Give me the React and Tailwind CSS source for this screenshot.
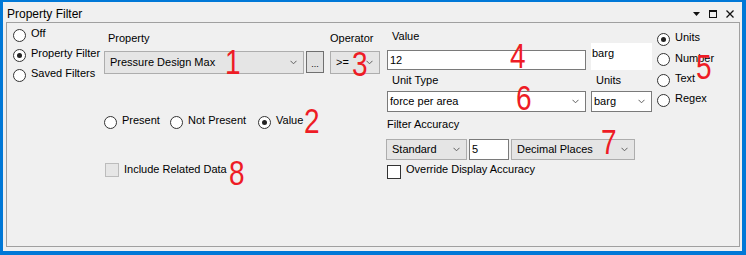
import React from "react";

const FONT = { fontFamily: '"Liberation Sans", Arial, sans-serif' };

function Radio({ checked, label, className = "" }) {
  return (
    <div className={`flex items-center h-[20px] ${className}`}>
      <span className="w-[13px] h-[13px] rounded-full border border-[#333] bg-white flex items-center justify-center shrink-0">
        {checked && <span className="w-[5px] h-[5px] rounded-full bg-[#222]" />}
      </span>
      <span className="ml-[5px] -mt-[3px] text-[11px] text-black whitespace-nowrap">{label}</span>
    </div>
  );
}

function Chevron() {
  return (
    <svg width="7" height="5" viewBox="0 0 7 5" className="shrink-0">
      <path d="M0.5 0.8 L3.5 3.8 L6.5 0.8" fill="none" stroke="#606060" strokeWidth="1" />
    </svg>
  );
}

// grey "DropDownList" style combo
function GreyCombo({ text, className = "" }) {
  return (
    <div className={`flex items-center justify-between border border-[#adadad] bg-[#e5e5e5] pl-[5px] pr-[6px] text-[11px] ${className}`}>
      <span className="whitespace-nowrap">{text}</span>
      <Chevron />
    </div>
  );
}

// white editable combo
function WhiteCombo({ text, className = "" }) {
  return (
    <div className={`flex items-center justify-between border border-[#7a7a7a] bg-white pl-[2px] pr-[6px] text-[11px] ${className}`}>
      <span className="whitespace-nowrap">{text}</span>
      <Chevron />
    </div>
  );
}

function Digit({ n, className }) {
  return (
    <span className={`absolute text-[35px] leading-none text-[#ee1c25] scale-x-80 origin-top-left pointer-events-none ${className}`}>
      {n}
    </span>
  );
}

export default function App() {
  return (
    <div style={FONT} className="relative w-[746px] h-[255px] bg-[#f0f0f0] border-[#0078d7] border-l-[3px] border-t-2 border-r-4 border-b-4 flex flex-col text-black">
      {/* title bar */}
      <div className="h-[20px] flex items-center pl-[4px] pr-[8px]">
        <span className="text-[12px] mt-[3px]">Property Filter</span>
        <div className="ml-auto flex items-center gap-[9px] mt-[3px]">
          <svg width="7" height="4" viewBox="0 0 7 4"><path d="M0 0 H7 L3.5 4 Z" fill="#111" /></svg>
          <svg width="8" height="8" viewBox="0 0 8 8"><rect x="0.5" y="0.5" width="7" height="7" fill="none" stroke="#111" /><rect x="0" y="0" width="8" height="2" fill="#111" /></svg>
          <svg width="8" height="8" viewBox="0 0 8 8"><path d="M0.5 0.5 L7.5 7.5 M7.5 0.5 L0.5 7.5" stroke="#111" strokeWidth="1.3" /></svg>
        </div>
      </div>

      {/* panel */}
      <div className="flex-1 ml-[3px] mr-[2px] mb-[4px] border border-[#a0a0a0] flex items-start">
        {/* mode radios */}
        <div className="w-[97px] pl-[6px] pt-[2px]">
          <Radio label="Off" />
          <Radio checked label="Property Filter" />
          <Radio label="Saved Filters" />
        </div>

        {/* property + operator */}
        <div className="w-[276px]">
          <div className="flex text-[11px] pt-[7px] h-[20px]">
            <span className="w-[226px] pl-[4px]">Property</span>
            <span>Operator</span>
          </div>
          <div className="flex mt-[8px]">
            <GreyCombo text="Pressure Design Max" className="w-[200px] h-[23px]" />
            <div className="ml-[2px] w-[18px] h-[22px] border border-[#707070] bg-[#e1e1e1] flex items-end justify-center pb-[3px] text-[9px] leading-none">...</div>
            <GreyCombo text=">=" className="ml-[6px] w-[50px] h-[23px]" />
          </div>
          <div className="flex mt-[38px]">
            <Radio label="Present" className="w-[66px]" />
            <Radio label="Not Present" className="w-[88px]" />
            <Radio checked label="Value" />
          </div>
          <div className="flex items-start mt-[31px] pl-[1px]">
            <span className="w-[14px] h-[14px] border border-[#bcbcbc] bg-[#e6e6e6]" />
            <span className="ml-[5px] text-[11px] leading-[13px]">Include Related Data</span>
          </div>
        </div>

        {/* value side */}
        <div className="ml-[7px] w-[265px]">
          <div className="flex items-end">
            <div className="w-[199px]">
              <div className="text-[11px] pt-[7px] pl-[5px] leading-[13px]">Value</div>
              <div className="mt-[7px] h-[20px] border border-[#7a7a7a] bg-white flex items-center pl-[2px] text-[11px]">12</div>
            </div>
            <div className="ml-[5px] w-[61px] h-[27px] bg-white text-[11px] pl-[1px] pt-[2px]">barg</div>
          </div>
          <div className="flex text-[11px] mt-[4px] leading-[13px]">
            <span className="w-[209px] pl-[5px]">Unit Type</span>
            <span>Units</span>
          </div>
          <div className="flex mt-[4px]">
            <WhiteCombo text="force per area" className="w-[199px] h-[21px]" />
            <WhiteCombo text="barg" className="ml-[5px] w-[61px] h-[21px]" />
          </div>
          <div className="text-[11px] mt-[6px] leading-[13px]">Filter Accuracy</div>
          <div className="flex mt-[8px] -ml-[1px]">
            <GreyCombo text="Standard" className="w-[81px] h-[21px]" />
            <div className="ml-[2px] w-[40px] h-[21px] border border-[#7a7a7a] bg-white text-[11px] pl-[2px] pt-[1px]">5</div>
            <GreyCombo text="Decimal Places" className="ml-[2px] w-[124px] h-[21px]" />
          </div>
          <div className="flex items-start mt-[5px]">
            <span className="w-[14px] h-[14px] border border-[#333] bg-white" />
            <span className="ml-[5px] -mt-[2px] text-[11px] leading-[13px]">Override Display Accuracy</span>
          </div>
        </div>

        {/* value type radios */}
        <div className="ml-[5px] pt-[6px]">
          <Radio checked label="Units" />
          <Radio label="Number" className="h-[21px]" />
          <Radio label="Text" />
          <Radio label="Regex" />
        </div>
      </div>

      {/* annotation numbers */}
      <Digit n="1" className="left-[222px] top-[42px]" />
      <Digit n="2" className="left-[301px] top-[101px]" />
      <Digit n="3" className="left-[349px] top-[44px]" />
      <Digit n="4" className="left-[507px] top-[36px]" />
      <Digit n="5" className="left-[693px] top-[47px]" />
      <Digit n="6" className="left-[513px] top-[78px]" />
      <Digit n="7" className="left-[598px] top-[122px]" />
      <Digit n="8" className="left-[226px] top-[153px]" />
    </div>
  );
}
